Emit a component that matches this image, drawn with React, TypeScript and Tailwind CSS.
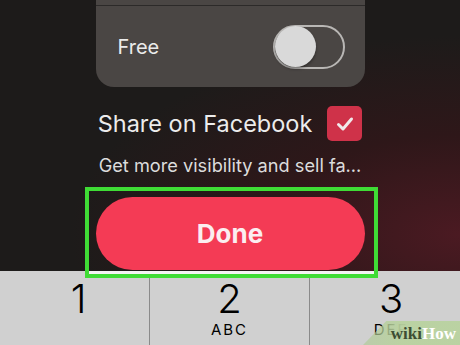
import React from 'react';

const keys = [
  { digit: '1', letters: '', pad: 'pl-[8px]' },
  { digit: '2', letters: 'ABC', pad: '' },
  { digit: '3', letters: 'DEF', pad: 'pl-[12px]' },
];

export default function App() {
  return (
    <div
      className="relative w-[460px] h-[345px] overflow-hidden bg-[#1d1b1a] flex flex-col"
      style={{ fontFamily: 'Inter, "Noto Sans", sans-serif' }}
    >
      {/* reddish glow */}
      <div className="absolute inset-0 bg-[radial-gradient(ellipse_at_100%_68%,#4b1a22_0%,#2e1719_30%,transparent_60%)]" />

      <div className="relative flex flex-col items-center flex-1">
        {/* Settings card */}
        <div className="w-[269px] h-[87px] bg-[#4a4644] rounded-b-[18px] flex flex-col">
          <div className="h-[6px] border-b border-[#2c2a29]" />
          <div className="flex-1 flex items-center justify-between pl-[22px] pr-[20px]">
            <span className="text-[20px] text-[#ebebeb]">Free</span>
            <div className="w-[72px] h-[44px] rounded-full border-2 border-[#b9b7b5] flex items-center">
              <div className="w-[41px] h-[41px] rounded-full bg-[#d9d9d9] shadow-[0_2px_3px_rgba(0,0,0,0.35)]" />
            </div>
          </div>
        </div>

        {/* Share on Facebook */}
        <div className="mt-[19px] flex items-center gap-[15px]">
          <span className="text-[23.5px] text-[#ececec]">Share on Facebook</span>
          <div className="w-[35px] h-[35px] rounded-[5px] bg-[#cf3249] flex items-center justify-center">
            <svg width="20" height="20" viewBox="0 0 20 20" fill="none">
              <path d="M3.5 10.5l4.5 4.5 8.5-10" stroke="#f1e9ea" strokeWidth="3" strokeLinecap="round" strokeLinejoin="round" />
            </svg>
          </div>
        </div>

        <p className="mt-[11px] text-[18.2px] leading-[26px] text-[#dcdcdc]">Get more visibility and sell fa...</p>

        {/* Done button */}
        <div className="mt-[19px] w-[269px] h-[73px] rounded-full bg-[#f43b55] flex items-center justify-center">
          <span className="text-[26px] font-bold text-[#fbeef0]">Done</span>
        </div>
      </div>

      {/* Keypad */}
      <div className="relative h-[74px] bg-[#d0d0d0] grid grid-cols-[150px_160px_150px]">
        {keys.map((k, i) => (
          <div
            key={k.digit}
            className={`flex flex-col items-center pt-[8px] ${k.pad} ${i < 2 ? 'border-r border-[#8a8a8a]' : ''}`}
          >
            <span className="text-[40px] leading-[40px] font-light text-black">{k.digit}</span>
            <span className="mt-[3px] text-[15px] leading-[16px] tracking-[2px] text-black">{k.letters}</span>
          </div>
        ))}
      </div>

      {/* highlight box */}
      <div className="absolute left-[85px] top-[187px] w-[293px] h-[91px] border-[4px] border-[#3fdc35] flex flex-col justify-end">
        <div className="h-[3px] bg-[#f4f4f4]" />
      </div>

      {/* watermark */}
      <div className="absolute right-0 bottom-0 w-[97px] h-[24px] bg-[linear-gradient(90deg,rgba(170,200,140,0.55),rgba(185,210,160,0.95)_40%)] [clip-path:polygon(24%_0,100%_0,100%_100%,0_100%)] flex items-center justify-end pr-[4px]">
        <span className="text-[17px] font-bold leading-none" style={{ fontFamily: '"Liberation Serif", serif' }}>
          <span className="text-[#3d4d33]">wiki</span>
          <span className="text-white">How</span>
        </span>
      </div>
    </div>
  );
}
